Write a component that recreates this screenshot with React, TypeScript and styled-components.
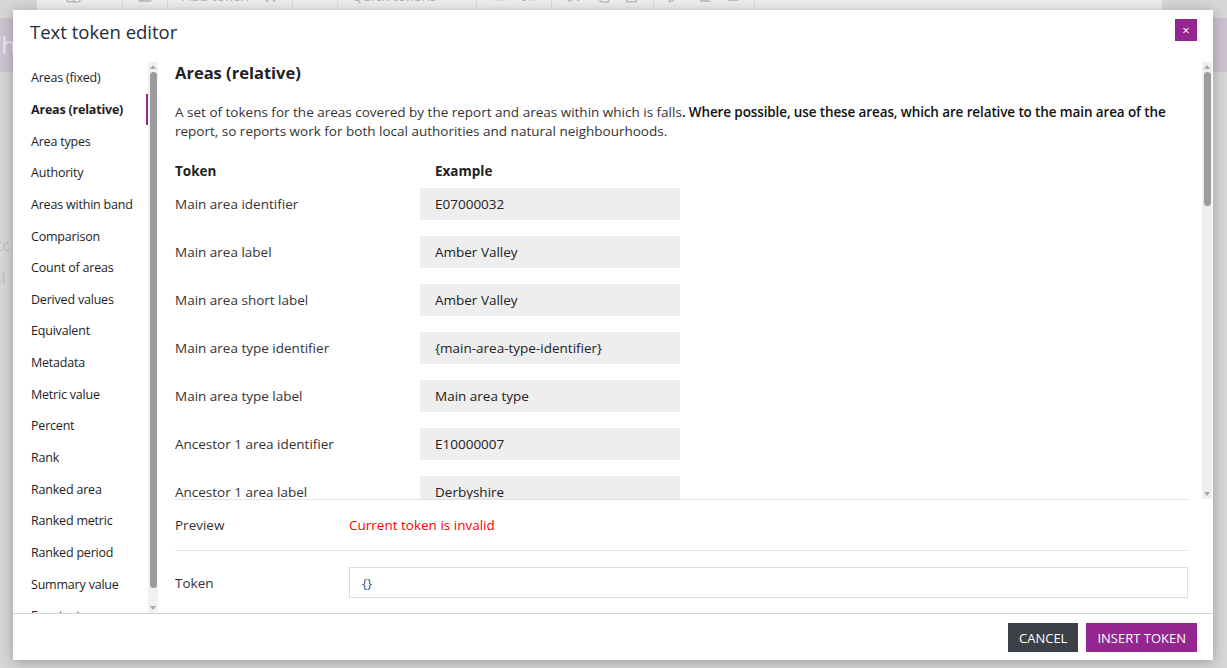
import React from 'react';
import styled, { createGlobalStyle } from 'styled-components';
import {
    Table, Image, Braces, Code, List, ListOrdered, Scissors, Copy,
    Clipboard, Pen, Eraser, Square, ChevronDown
} from 'lucide-react';

type TokenRow = {
    label: string,
    example: string
};

const purple: string = '#93278f';
const fontStack: string = '"Open Sans", "Noto Sans", "Liberation Sans", sans-serif';

const categories: string[] = [
    'Areas (fixed)', 'Areas (relative)', 'Area types', 'Authority', 'Areas within band',
    'Comparison', 'Count of areas', 'Derived values', 'Equivalent', 'Metadata',
    'Metric value', 'Percent', 'Rank', 'Ranked area', 'Ranked metric',
    'Ranked period', 'Summary value', 'Free text'
];

const tokens: TokenRow[] = [
    { label: 'Main area identifier', example: 'E07000032' },
    { label: 'Main area label', example: 'Amber Valley' },
    { label: 'Main area short label', example: 'Amber Valley' },
    { label: 'Main area type identifier', example: '{main-area-type-identifier}' },
    { label: 'Main area type label', example: 'Main area type' },
    { label: 'Ancestor 1 area identifier', example: 'E10000007' },
    { label: 'Ancestor 1 area label', example: 'Derbyshire' }
];

const GlobalStyle = createGlobalStyle`
    html, body {
        margin: 0;
        padding: 0;
        overflow: hidden;
        font-family: ${fontStack};
    }
    * { box-sizing: border-box; }
`;

/* the page that sits behind the dialog */
const Page = styled.div`
    position: relative;
    width: 1227px;
    height: 668px;
    overflow: hidden;
    background: #d6d6d6;
`;

const ToolbarClip = styled.div`
    height: 10px;
    margin: 0 65px 0 37px;
    overflow: hidden;
    background: #ededee;
`;

const ToolbarRow = styled.div`
    display: flex;
    align-items: center;
    height: 30px;
    margin-top: -20px;
    padding-left: 14px;
    color: #b3b3b6;
    font-size: 14px;
`;

const ToolGroup = styled.div`
    display: flex;
    align-items: center;
    gap: 14px;
    height: 100%;
    padding: 0 14px;
    border-right: 1px solid #dcdcde;
`;

const Banner = styled.div`
    margin-top: 8px;
    height: 54px;
    background: #cdc2d2;
    color: #ece6ee;
    font-size: 24px;
    line-height: 54px;
    text-indent: -12px;
`;

const GhostText = styled.div`
    margin-top: 156px;
    color: #bdbdbd;
    font-size: 17px;
    line-height: 33px;
    text-indent: -17px;
`;

/* dialog */
const Modal = styled.div`
    position: absolute;
    left: 13px;
    top: 10px;
    width: 1200px;
    height: 650px;
    background: #fff;
    box-shadow: 0 2px 12px rgba(0, 0, 0, 0.28);
    display: flex;
    flex-direction: column;
    font-size: 13.5px;
    color: #333;
`;

const Header = styled.div`
    flex: none;
    height: 52px;
    display: flex;
    align-items: flex-start;
    justify-content: space-between;
    padding: 0 16px 0 17px;
`;

const Title = styled.h2`
    margin: 0;
    padding-top: 10px;
    font-size: 18.5px;
    line-height: 24px;
    font-weight: 400;
    color: #1f2c3a;
`;

const CloseButton = styled.button`
    margin-top: 9px;
    width: 22px;
    height: 22px;
    padding: 0;
    border: none;
    background: ${purple};
    color: #fff;
    font-family: ${fontStack};
    font-size: 13px;
    line-height: 22px;
`;

const Body = styled.div`
    flex: 1;
    min-height: 0;
    display: flex;
`;

const Sidebar = styled.nav`
    flex: none;
    width: 145px;
    margin-right: 2px;
    display: flex;
`;

const SideList = styled.ul`
    flex: 1;
    margin: 0;
    padding: 0;
    list-style: none;
    overflow: hidden;
`;

const SideItem = styled.li<{ $active?: boolean }>`
    height: 31.65px;
    display: flex;
    align-items: center;
    padding-left: 18px;
    white-space: nowrap;
    font-size: 12.5px;
    letter-spacing: -0.2px;
    color: #1e1e1e;
    font-weight: ${(p) => (p.$active ? 700 : 400)};
    border-right: 2px solid ${(p) => (p.$active ? purple : 'transparent')};
`;

const ScrollBar = styled.div<{ $track: string }>`
    flex: none;
    width: 10px;
    display: flex;
    flex-direction: column;
    background: ${(p) => p.$track};
`;

const ScrollArrow = styled.div<{ $dir: 'up' | 'down' }>`
    flex: none;
    height: 10px;
    display: flex;
    align-items: center;
    justify-content: center;

    &::before {
        content: '';
        border-left: 3px solid transparent;
        border-right: 3px solid transparent;
        ${(p) => (p.$dir === 'up' ? 'border-bottom' : 'border-top')}: 4px solid #a6a6a6;
    }
`;

const ScrollTrack = styled.div`
    flex: 1;
    display: flex;
    flex-direction: column;
    align-items: center;
`;

const ScrollThumb = styled.div<{ $offset: number, $size: number }>`
    width: 7px;
    margin-top: ${(p) => p.$offset}px;
    height: ${(p) => p.$size}px;
    border-radius: 4px;
    background: #9c9c9c;
`;

const Content = styled.section`
    flex: 1;
    min-width: 0;
    display: flex;
    flex-direction: column;
`;

const ScrollRow = styled.div`
    flex: 1;
    min-height: 0;
    display: flex;
    padding-right: 1px;
`;

const ScrollContent = styled.div`
    flex: 1;
    min-width: 0;
    overflow: hidden;
    padding: 0 14px 0 15px;
`;

const Heading = styled.h3`
    margin: 0;
    font-size: 16.5px;
    line-height: 22px;
    font-weight: 700;
    color: #222;
`;

const Intro = styled.p`
    margin: 18.5px 0 0;
    line-height: 19px;
    color: #333;

    strong {
        color: #111;
        font-weight: 600;
        letter-spacing: -0.12px;
    }
`;

const TableHead = styled.div`
    margin-top: 21px;
    margin-bottom: 7.5px;
    display: flex;
    height: 19px;
    align-items: center;
    font-weight: 700;
    color: #222;
`;

const Row = styled.div`
    display: flex;
    align-items: center;
    height: 32px;
    margin-bottom: 16px;
`;

const LabelCell = styled.div`
    flex: none;
    width: 245px;
`;

const HeadExample = styled.div`
    padding-left: 15px;
`;

const ExampleCell = styled.div`
    flex: none;
    width: 260px;
    height: 32px;
    padding-left: 15px;
    display: flex;
    align-items: center;
    background: #eeeeee;
    color: #222;
`;

const Bottom = styled.div`
    flex: none;
    margin: 0 25px 0 15px;
`;

const PreviewRow = styled.div`
    height: 51px;
    display: flex;
    align-items: center;
    border-top: 1px solid #e2e2e2;
`;

const TokenField = styled.div`
    display: flex;
    align-items: center;
    padding: 16px 0 15px;
    border-top: 1px solid #e2e2e2;
`;

const FieldLabel = styled.div`
    flex: none;
    width: 174px;
`;

const Invalid = styled.span`
    color: #ff0000;
`;

const TokenInput = styled.input`
    flex: 1;
    height: 31px;
    padding: 0 12px;
    border: 1px solid #dcdcdc;
    font-family: ${fontStack};
    font-size: 13.5px;
    color: #2c5f8d;
    outline: none;
`;

const Footer = styled.div`
    flex: none;
    height: 47px;
    display: flex;
    justify-content: flex-end;
    align-items: flex-start;
    gap: 8px;
    padding: 9px 16px 0;
    border-top: 1px solid #d3d3d3;
`;

const ActionButton = styled.button<{ $primary?: boolean }>`
    height: 29px;
    padding: 0 11px;
    border: none;
    font-family: ${fontStack};
    font-size: 13px;
    text-transform: uppercase;
    color: #fff;
    background: ${(p) => (p.$primary ? purple : '#3b4046')};
`;

type ScrollProps = {
    track: string,
    offset: number,
    size: number
};

const FakeScrollbar: React.FC<ScrollProps> = (props: ScrollProps) => (
    <ScrollBar $track={props.track}>
        <ScrollArrow $dir="up"/>
        <ScrollTrack>
            <ScrollThumb $offset={props.offset} $size={props.size}/>
        </ScrollTrack>
        <ScrollArrow $dir="down"/>
    </ScrollBar>
);

const BackgroundPage: React.FC = () => (
    <>
        <ToolbarClip>
            <ToolbarRow>
                <ToolGroup><Table size={17}/><ChevronDown size={12}/></ToolGroup>
                <ToolGroup><Image size={16}/></ToolGroup>
                <ToolGroup>Add token <Braces size={15}/></ToolGroup>
                <ToolGroup><Code size={16}/></ToolGroup>
                <ToolGroup>Quick tokens <ChevronDown size={12}/></ToolGroup>
                <ToolGroup><List size={16}/><ListOrdered size={16}/></ToolGroup>
                <ToolGroup><Scissors size={15}/><Copy size={15}/><Clipboard size={15}/></ToolGroup>
                <ToolGroup><Pen size={15}/><Eraser size={15}/><Square size={14} fill="#b3b3b6"/></ToolGroup>
            </ToolbarRow>
        </ToolbarClip>
        <Banner>The</Banner>
        <GhostText>
            <div>Acc</div>
            <div>Psi</div>
        </GhostText>
    </>
);

export default function App() {
    return (
        <Page>
            <GlobalStyle/>
            <BackgroundPage/>
            <Modal>
                <Header>
                    <Title>Text token editor</Title>
                    <CloseButton aria-label="Close">×</CloseButton>
                </Header>

                <Body>
                    <Sidebar>
                        <SideList>
                            {categories.map((c: string) => (
                                <SideItem key={c} $active={c === 'Areas (relative)'}>{c}</SideItem>
                            ))}
                        </SideList>
                        <FakeScrollbar track="#f1f1f1" offset={0} size={516}/>
                    </Sidebar>

                    <Content>
                        <ScrollRow>
                            <ScrollContent>
                                <Heading>Areas (relative)</Heading>
                                <Intro>
                                    A set of tokens for the areas covered by the report and areas within which is falls
                                    <strong>. Where possible, use these areas, which are relative to the main area of the </strong>
                                    report, so reports work for both local authorities and natural neighbourhoods.
                                </Intro>

                                <TableHead>
                                    <LabelCell>Token</LabelCell>
                                    <HeadExample>Example</HeadExample>
                                </TableHead>
                                {tokens.map((t: TokenRow) => (
                                    <Row key={t.label}>
                                        <LabelCell>{t.label}</LabelCell>
                                        <ExampleCell>{t.example}</ExampleCell>
                                    </Row>
                                ))}
                            </ScrollContent>
                            <FakeScrollbar track="#eeeeee" offset={0} size={134}/>
                        </ScrollRow>

                        <Bottom>
                            <PreviewRow>
                                <FieldLabel>Preview</FieldLabel>
                                <Invalid>Current token is invalid</Invalid>
                            </PreviewRow>
                            <TokenField>
                                <FieldLabel>Token</FieldLabel>
                                <TokenInput defaultValue="{}"/>
                            </TokenField>
                        </Bottom>
                    </Content>
                </Body>

                <Footer>
                    <ActionButton>Cancel</ActionButton>
                    <ActionButton $primary>Insert token</ActionButton>
                </Footer>
            </Modal>
        </Page>
    );
}
